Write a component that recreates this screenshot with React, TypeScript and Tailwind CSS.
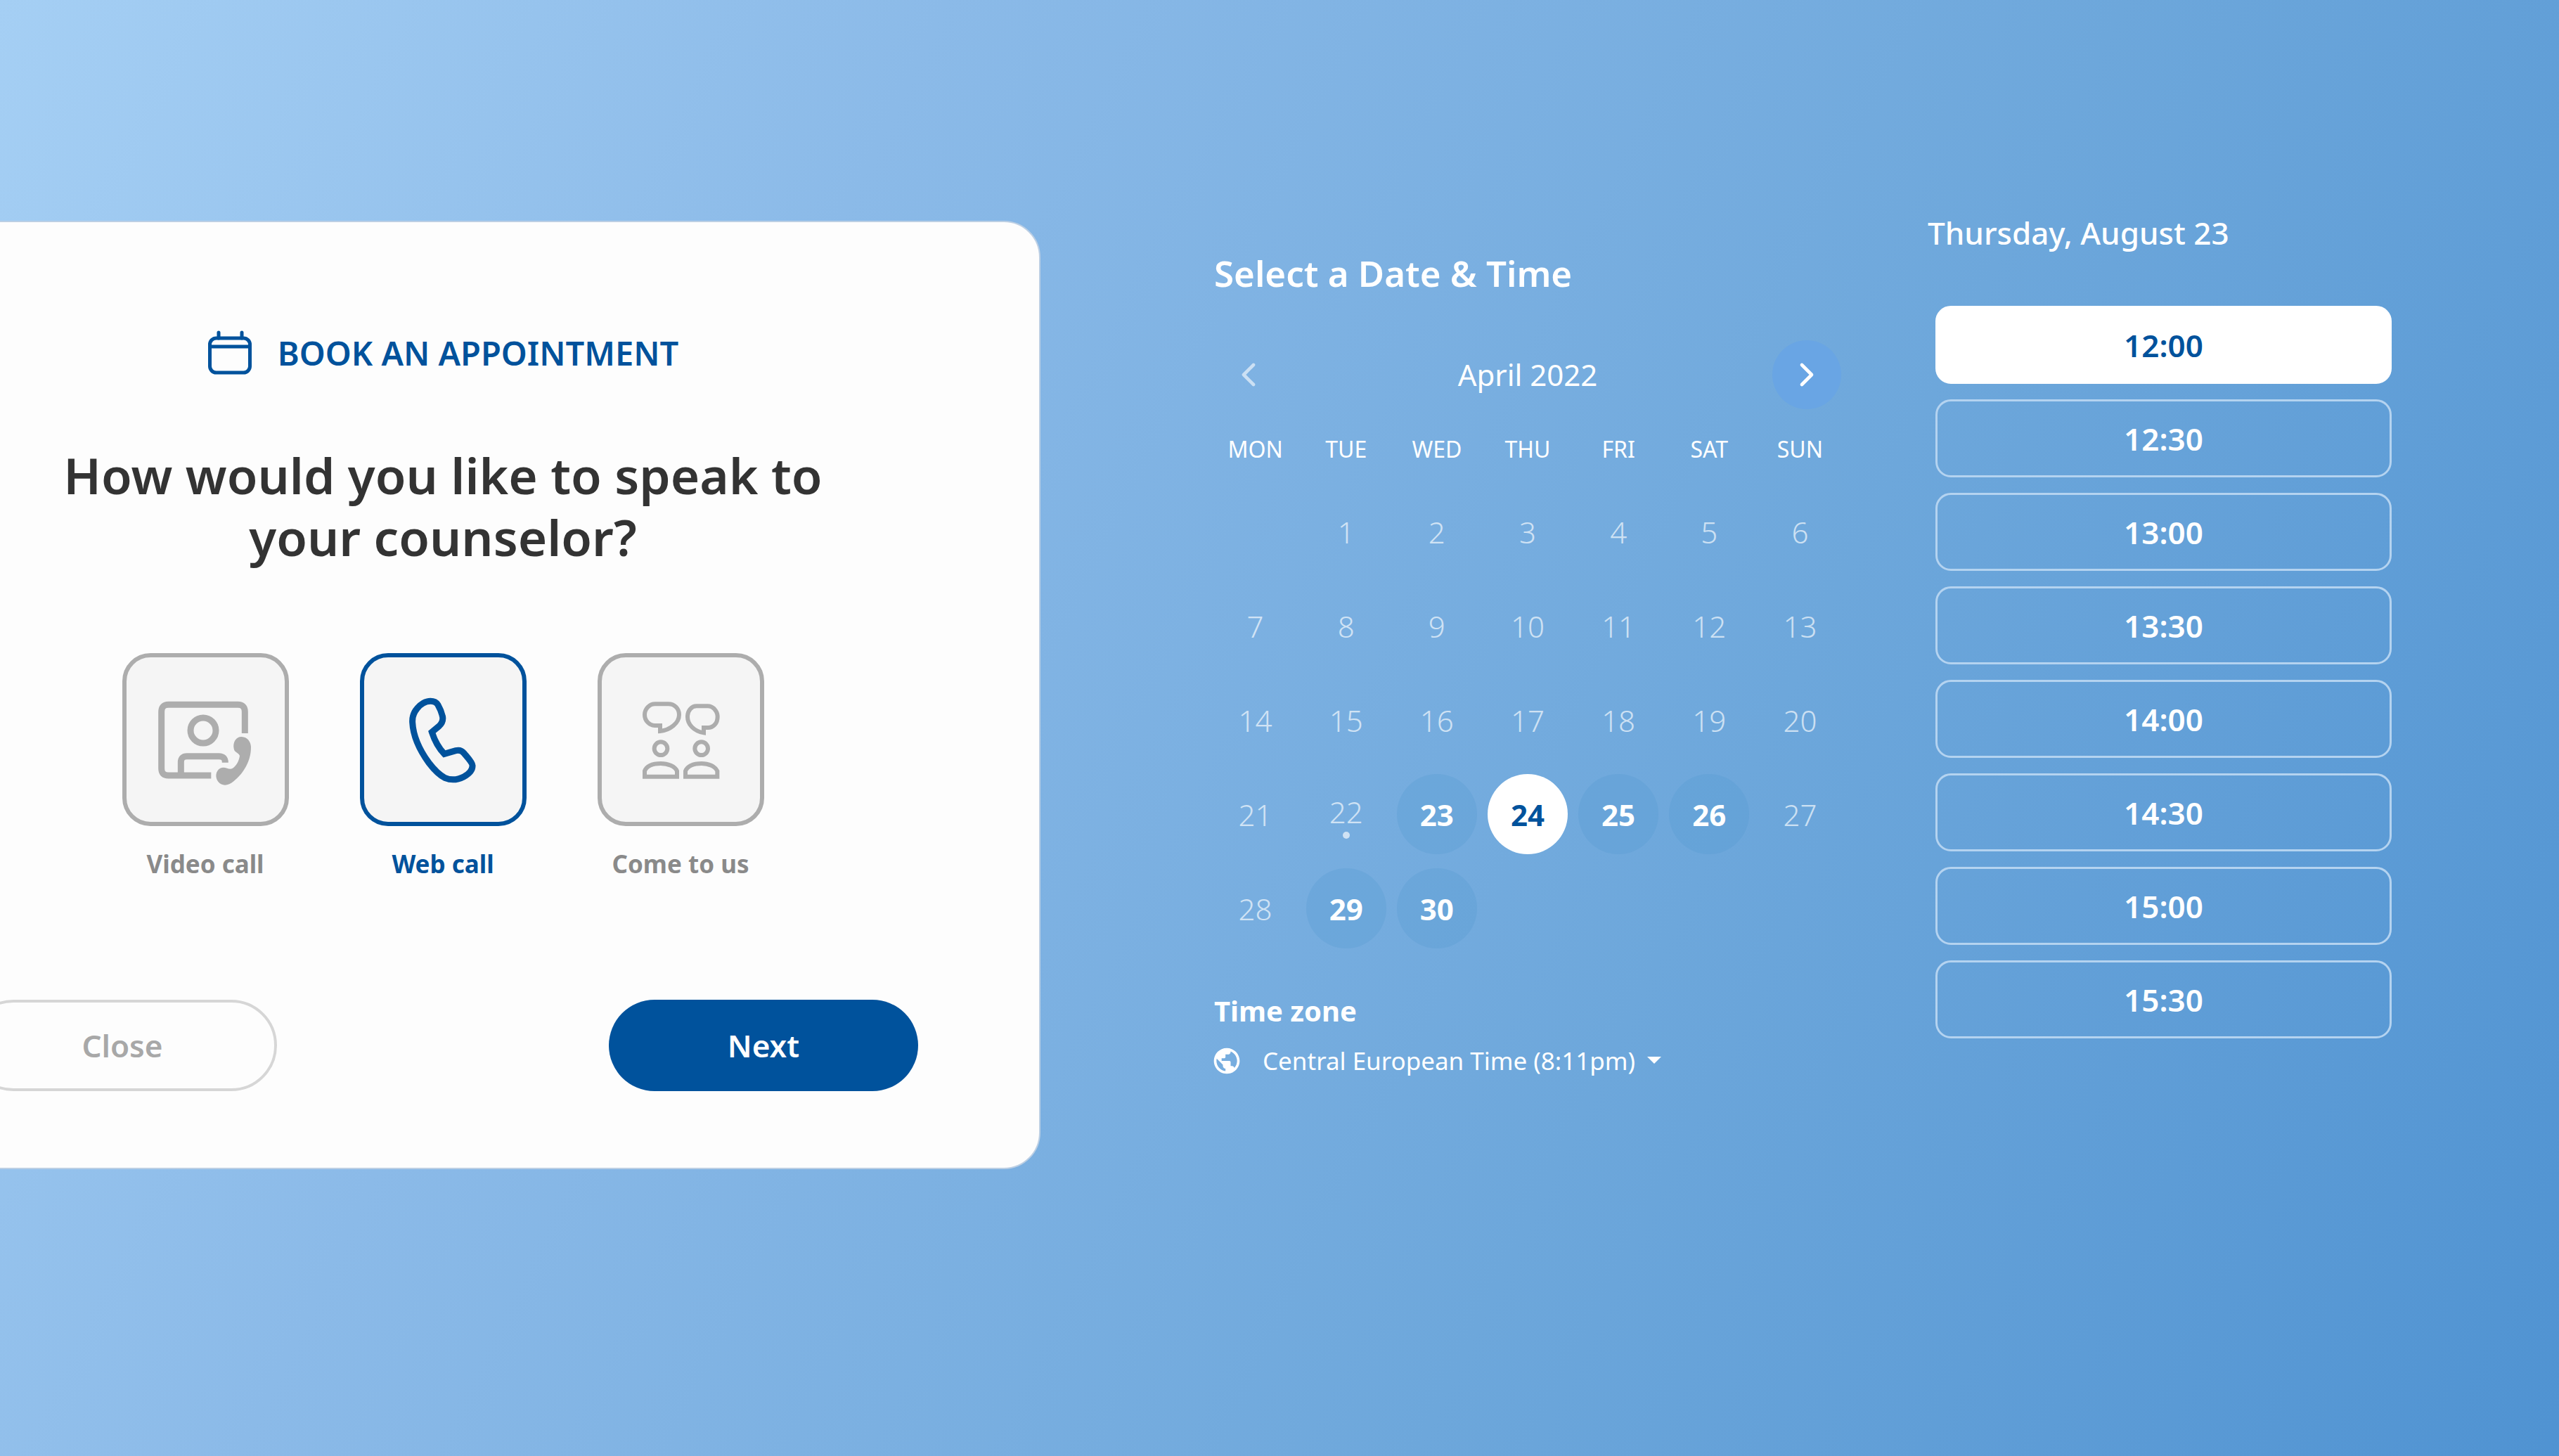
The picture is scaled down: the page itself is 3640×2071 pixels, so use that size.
import React, { useState } from 'react';
import { ChevronLeft, ChevronRight } from 'lucide-react';
import { MdPublic } from 'react-icons/md';

function CalendarIcon() {
  return (
    <svg viewBox="0 0 64 64" className="size-16" fill="none" stroke="currentColor" aria-hidden="true">
      <rect x="3.5" y="11" width="57" height="49" rx="9" strokeWidth="5" />
      <path d="M3 23H61" strokeWidth="5" />
      <path d="M16 3V11M49 3V11" strokeWidth="5" strokeLinecap="round" />
    </svg>
  );
}

function VideoCallIcon() {
  return (
    <svg viewBox="8 -9 480 480" className="size-40" fill="none" stroke="currentColor" strokeWidth="27" aria-hidden="true">
      <path d="M417 204V112Q417 82 387 82H91Q61 82 61 112V354Q61 384 91 384H273" />
      <circle cx="239" cy="192" r="54" />
      <path d="M144 384V328Q144 302 170 302H306Q333 302 333 329" />
      <path
        stroke="none"
        fill="currentColor"
        d="M370 270C364 240 382 218 403 219C428 220 442 240 443 262C444 320 412 375 370 408C345 430 320 430 304 412C288 392 292 364 312 353C332 344 346 360 362 355C380 345 392 322 395 300C392 288 373 287 370 270Z"
      />
    </svg>
  );
}

function WebCallIcon() {
  return (
    <svg viewBox="-15 6 480 480" className="size-40" fill="none" stroke="currentColor" strokeWidth="27" aria-hidden="true">
      <path d="M172 82C150 82 128 97 115 113C100 130 94 150 95 172C98 230 125 290 165 345C190 378 215 400 235 410C262 421 290 417 315 404C340 390 352 372 351 356C350 342 328 320 315 304C305 292 292 290 280 293L231 307C205 280 188 245 178 214L207 190C222 177 226 165 224 150C220 130 212 112 204 98C195 84 185 82 172 82Z" />
    </svg>
  );
}

function ComeToUsIcon() {
  return (
    <svg viewBox="-6 -9 480 480" className="size-40" fill="none" stroke="currentColor" strokeWidth="18" aria-hidden="true">
      <path d="M147 171H124C100 169 81 150 81 125C81 98 103 79 125 79H182C208 79 228 98 228 125C228 160 190 190 147 195Z" />
      <path d="M333 180H352C375 180 392 160 392 134C392 108 372 88 350 88H302C282 88 264 106 264 134C264 165 290 195 333 202Z" />
      <circle cx="150" cy="269" r="28" />
      <circle cx="323" cy="269" r="28" />
      <path d="M81 389V365C90 341 120 333 150 333C180 333 210 345 219 365V389Z" />
      <path d="M255 389V365C265 341 295 333 324 333C353 333 382 345 391 365V389Z" />
    </svg>
  );
}

const methods = [
  { id: 'video', label: 'Video call', Icon: VideoCallIcon },
  { id: 'web', label: 'Web call', Icon: WebCallIcon },
  { id: 'visit', label: 'Come to us', Icon: ComeToUsIcon },
];

const weekdays = ['MON', 'TUE', 'WED', 'THU', 'FRI', 'SAT', 'SUN'];
const weeks = Array.from({ length: 5 }, (_, w) => Array.from({ length: 7 }, (_, d) => w * 7 + d));
const available = [23, 24, 25, 26, 29, 30];
const today = 22;
const slots = ['12:00', '12:30', '13:00', '13:30', '14:00', '14:30', '15:00', '15:30'];

function AppointmentCard() {
  const [method, setMethod] = useState('web');
  return (
    <section className="mt-[314px] -ml-[220px] rounded-[52px] border-2 border-[#bccfe4] bg-[#fdfdfd] px-[172px] pt-[154px] pb-[109px]">
      <div className="flex items-center justify-center gap-9 text-[#00529c]">
        <CalendarIcon />
        <p className="text-[47px] leading-[64px] font-semibold">BOOK AN APPOINTMENT</p>
      </div>
      <h1 id="question" className="mx-auto mt-[98px] max-w-[1200px] text-center text-[71px] leading-[88px] font-semibold text-[#333333]">
        How would you like to speak to your counselor?
      </h1>
      <div role="radiogroup" aria-labelledby="question" className="mt-[121px] flex justify-center gap-[101px]">
        {methods.map(({ id, label, Icon }) => {
          const active = method === id;
          return (
            <label key={id} className="flex w-[237px] cursor-pointer flex-col items-center">
              <input type="radio" name="method" value={id} checked={active} onChange={() => setMethod(id)} className="sr-only" />
              <span
                className={`flex h-[246px] w-full items-center justify-center rounded-[40px] border-6 bg-[#f5f5f5] ${
                  active ? 'border-[#00529c] text-[#00529c]' : 'border-[#adadad] text-[#adadad]'
                }`}
              >
                <Icon />
              </span>
              <span
                className={`mt-[30px] text-[35px] leading-[48px] font-bold whitespace-nowrap ${active ? 'text-[#00529c]' : 'text-[#8a8a8a]'}`}
              >
                {label}
              </span>
            </label>
          );
        })}
      </div>
      <div className="mt-[169px] flex justify-between">
        <button type="button" className="h-[130px] w-[440px] rounded-full border-4 border-[#d6d6d6] text-[44px] font-semibold text-[#a8a8a8]">
          Close
        </button>
        <button type="button" className="h-[130px] w-[440px] rounded-full bg-[#00529c] text-[44px] font-semibold text-white">
          Next
        </button>
      </div>
    </section>
  );
}

function DayButton({ day, selected, onSelect }: { day: number; selected: boolean; onSelect: (day: number) => void }) {
  const open = available.includes(day);
  const tone = selected
    ? 'bg-white font-bold text-[#00529c]'
    : open
      ? 'bg-[#4f96d1]/25 font-bold text-white'
      : 'font-light text-white/65';
  return (
    <button
      type="button"
      disabled={!open}
      aria-pressed={selected}
      onClick={() => onSelect(day)}
      className={`relative mx-auto flex size-[114px] items-center justify-center rounded-full text-[42px] ${tone} ${day === today ? 'pb-2' : ''}`}
    >
      {day}
      {day === today && <span className="absolute bottom-[22px] size-2.5 rounded-full bg-white/65" />}
    </button>
  );
}

function Calendar() {
  const [selected, setSelected] = useState(24);
  return (
    <section className="pt-[358px] pr-[55px] pl-[241px]">
      <h2 className="px-1.5 text-[51px] leading-[60px] font-semibold">Select a Date &amp; Time</h2>
      <div className="mt-[66px] flex items-center justify-between px-1.5">
        <button type="button" aria-label="Previous month" className="flex size-[98px] items-center justify-center rounded-full text-white/60">
          <ChevronLeft className="size-14" strokeWidth={2} />
        </button>
        <p className="text-[42px] leading-[56px]">April 2022</p>
        <button type="button" aria-label="Next month" className="flex size-[98px] items-center justify-center rounded-full bg-[#69a5e4]">
          <ChevronRight className="size-14" strokeWidth={2} />
        </button>
      </div>
      <table className="mt-[37px] w-full table-fixed">
        <thead>
          <tr>
            {weekdays.map((name) => (
              <th key={name} scope="col" className="p-0 pb-[30px] text-[32px] leading-[40px] font-normal">
                {name}
              </th>
            ))}
          </tr>
        </thead>
        <tbody>
          {weeks.map((week) => (
            <tr key={week[0]}>
              {week.map((day) => (
                <td key={day} className="h-[134px] p-0">
                  {day > 0 && day < 31 && <DayButton day={day} selected={day === selected} onSelect={setSelected} />}
                </td>
              ))}
            </tr>
          ))}
        </tbody>
      </table>
      <div className="mt-[55px] px-1.5">
        <label htmlFor="zone" className="block text-[40px] leading-[48px] font-bold">
          Time zone
        </label>
        <div className="mt-[23px] -ml-1 flex items-center gap-[29px]">
          <MdPublic className="size-11" />
          <div className="relative">
            <select id="zone" className="block appearance-none bg-transparent pr-9 text-[35px] leading-[48px] outline-none">
              <option>Central European Time (8:11pm)</option>
            </select>
            <svg viewBox="0 0 20 10" className="pointer-events-none absolute top-[18px] right-0 h-2.5 w-5" fill="currentColor" aria-hidden="true">
              <path d="M0 0H20L10 10Z" />
            </svg>
          </div>
        </div>
      </div>
    </section>
  );
}

function TimeSlots() {
  const [slot, setSlot] = useState('12:00');
  return (
    <section className="pt-[301px] pr-[238px] pl-[62px]">
      <h2 className="text-[44px] leading-[60px] font-medium">Thursday, August 23</h2>
      <ul className="mt-[74px] ml-[11px] flex flex-col gap-[22px]">
        {slots.map((time) => (
          <li key={time}>
            <button
              type="button"
              aria-pressed={time === slot}
              onClick={() => setSlot(time)}
              className={`block h-[111px] w-full rounded-[22px] border-3 text-[44px] font-semibold ${
                time === slot ? 'border-white bg-white text-[#00529c]' : 'border-[#b4d3f0] text-white'
              }`}
            >
              {time}
            </button>
          </li>
        ))}
      </ul>
    </section>
  );
}

export default function App() {
  return (
    <main className="grid min-h-screen grid-cols-[37fr_30fr_24fr] items-start overflow-hidden bg-[linear-gradient(116deg,#a5cff4_0%,#8bbae8_29%,#6da7db_65%,#4d91d1_103%)] font-['Noto_Sans','Open_Sans',sans-serif] text-white">
      <AppointmentCard />
      <Calendar />
      <TimeSlots />
    </main>
  );
}
